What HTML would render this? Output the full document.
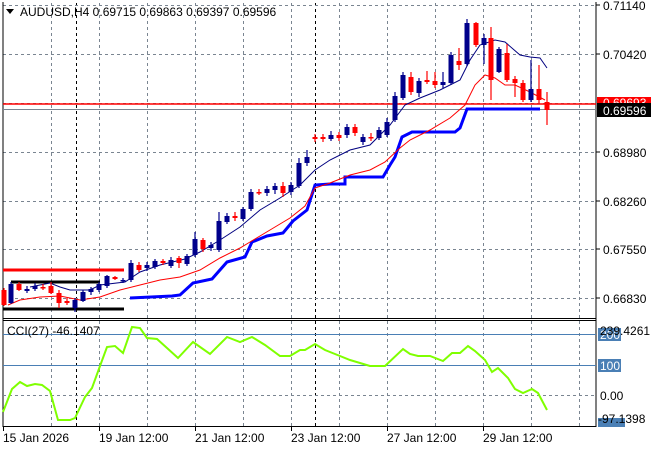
<!DOCTYPE html>
<html><head><meta charset="utf-8"><style>
html,body{margin:0;padding:0;background:#fff;width:660px;height:450px;overflow:hidden}
svg{display:block;font-family:"Liberation Sans",sans-serif}
</style></head><body>
<svg id="s" width="660" height="450" xmlns="http://www.w3.org/2000/svg">
<rect width="660" height="450" fill="#fff"/>
<g id="grid" stroke="#7a8591" stroke-width="1" stroke-dasharray="3,3" shape-rendering="crispEdges"></g>
<g fill="none" stroke="#000" shape-rendering="crispEdges">
<line x1="3" y1="2" x2="3" y2="427"/>
<line x1="596" y1="2" x2="596" y2="427"/>
<line x1="3" y1="318.5" x2="596" y2="318.5"/>
<line x1="3" y1="320.5" x2="596" y2="320.5"/>
<line x1="3" y1="426.5" x2="596" y2="426.5"/>
</g>
<g stroke="#4a7fb5" shape-rendering="crispEdges">
<line x1="3" y1="334.5" x2="596" y2="334.5"/>
<line x1="3" y1="365.5" x2="596" y2="365.5"/>
</g>
<line x1="3" y1="395.5" x2="596" y2="395.5" stroke="#7a8591" stroke-dasharray="3,3" shape-rendering="crispEdges"/>
<line x1="3" y1="104" x2="596" y2="104" stroke="#ff0000" stroke-width="1.5"/>
<line x1="3" y1="109.5" x2="596" y2="109.5" stroke="#7a8591"/>
<line x1="3" y1="270" x2="124" y2="270" stroke="#ff0000" stroke-width="3"/>
<line x1="11" y1="282" x2="100" y2="282" stroke="#000" stroke-width="3"/>
<line x1="3" y1="309" x2="124" y2="309" stroke="#000" stroke-width="3"/>
<polyline fill="none" stroke="#0000ff" stroke-width="3" points="130,298 172,296 180,295 193,283 212,279 227,262 245,257 252,242 267,236 283,233 293,221 307,210 315,185 330,184 345,184 345,177 383,177 390,165 395,157 402,137 412,132 455,132 460,128 467,109 540,109"/>
<polyline fill="none" stroke="#000080" stroke-width="1" points="30,287 50,283 60,287 70,290 90,290 100,285 125,282 140,272 160,265 185,259 200,252 220,240 240,227 260,210 280,198 300,185 315,170 330,160 350,150 370,145 390,125 405,105 420,98 440,90 460,80 470,60 480,45 495,40 505,42 520,55 530,57 540,58 547,68"/>
<polyline fill="none" stroke="#ff0000" stroke-width="1" points="8,305 20,300 40,297 60,296 80,300 100,297 120,290 140,285 160,280 180,277 200,270 220,258 240,248 250,242 270,230 290,218 305,206 315,188 330,183 350,175 370,170 385,162 400,148 410,140 430,130 450,118 465,105 475,85 485,75 495,78 505,85 515,85 530,92 545,100"/>
<g id="candles"></g>
<polyline fill="none" stroke="#7fff00" stroke-width="2" points="3,412 12,389 20,382 27,386 35,384 42,385 50,391 58,420 70,420 75,418 85,397 92,388 100,366 107,347 115,346 123,353 132,327 140,328 147,338 157,339 167,348 178,358 193,342 210,354 227,337 240,342 252,337 265,345 280,356 290,356 300,350 305,350 315,344 325,350 340,356 350,360 370,366 385,366 403,349 410,354 418,356 430,356 443,361 452,353 460,353 468,346 475,351 485,360 492,372 498,368 508,378 515,389 523,393 532,389 538,393 547,410"/>
<polygon points="6,9 14,9 10,14" fill="#000"/>
<text x="20" y="16" font-size="12" fill="#000">AUDUSD,H4  0.69715 0.69863 0.69397 0.69596</text>
<text x="7" y="335" font-size="12" fill="#000">CCI(27) -46.1407</text>
<g font-size="12" fill="#000">
<g stroke="#000" shape-rendering="crispEdges">
<line x1="596" y1="5" x2="600" y2="5"/><line x1="596" y1="54" x2="600" y2="54"/><line x1="596" y1="152" x2="600" y2="152"/><line x1="596" y1="201" x2="600" y2="201"/><line x1="596" y1="249" x2="600" y2="249"/><line x1="596" y1="298" x2="600" y2="298"/>
</g>
<text x="603" y="10">0.71140</text>
<text x="603" y="59">0.70420</text>
<text x="603" y="157">0.68980</text>
<text x="603" y="206">0.68260</text>
<text x="603" y="254">0.67550</text>
<text x="603" y="303">0.66830</text>
<rect x="597" y="97" width="54" height="11" fill="#ff0000"/>
<text x="603" y="107" fill="#fff">0.69693</text>
<rect x="597" y="103" width="54" height="14" fill="#000"/>
<text x="603" y="115" fill="#fff">0.69596</text>
<rect x="598" y="328" width="23" height="13" fill="#4a7fb5"/>
<text x="600" y="339" fill="#fff">200</text>
<text x="600" y="335">239.4261</text>
<rect x="598" y="359" width="23" height="13" fill="#4a7fb5"/>
<text x="600" y="370" fill="#fff">100</text>
<text x="600" y="400">0.00</text>
<rect x="598" y="418" width="27" height="9" fill="#4a7fb5"/>
<text x="598" y="423">-97.1398</text>
</g>
<g font-size="12" fill="#000">
<text x="3" y="442">15 Jan 2026</text>
<text x="99" y="442">19 Jan 12:00</text>
<text x="195" y="442">21 Jan 12:00</text>
<text x="291" y="442">23 Jan 12:00</text>
<text x="387" y="442">27 Jan 12:00</text>
<text x="483" y="442">29 Jan 12:00</text>
<g stroke="#000" shape-rendering="crispEdges">
<line x1="3.5" y1="427" x2="3.5" y2="431"/><line x1="99.5" y1="427" x2="99.5" y2="431"/><line x1="195.5" y1="427" x2="195.5" y2="431"/><line x1="291.5" y1="427" x2="291.5" y2="431"/><line x1="387.5" y1="427" x2="387.5" y2="431"/><line x1="483.5" y1="427" x2="483.5" y2="431"/>
</g>
</g>
</svg>
<script>
var NS="http://www.w3.org/2000/svg";
function el(p,t,a){var e=document.createElementNS(NS,t);for(var k in a)e.setAttribute(k,a[k]);p.appendChild(e);return e;}
var g=document.getElementById("grid");
[51,99,147,195,243,291,339,387,435,483,531,579].forEach(function(x){
 el(g,"line",{x1:x+.5,y1:3,x2:x+.5,y2:318});el(g,"line",{x1:x+.5,y1:321,x2:x+.5,y2:426});});
[76,315].forEach(function(x){
 el(g,"line",{x1:x+.5,y1:3,x2:x+.5,y2:426,stroke:"#000"});});
[5,54,152,201,249,298].forEach(function(y){el(g,"line",{x1:3,y1:y+.5,x2:596,y2:y+.5});});
el(g,"line",{x1:3,y1:103.5,x2:596,y2:103.5});
var C=[[4,290,305,288,306],[11,303,284,282,304],[19,284,290,282,291],[27,291,289,286,293],[35,289,286,283,291],[43,287,287,284,290],[51,286,293,282,294],[59,293,303,290,308],[67,301,303,298,305],[75,308,300,298,312],[83,301,292,290,302],[91,292,289,287,295],[99,290,284,282,292],[107,286,276,275,288],[115,277,279,276,280],[123,281,280,278,283],[131,280,263,260,282],[139,265,270,262,272],[147,268,265,262,271],[155,267,261,259,269],[163,261,263,259,265],[171,266,260,257,268],[179,258,263,256,268],[187,264,256,254,266],[195,255,239,232,257],[203,240,249,238,252],[211,248,245,242,251],[219,250,221,212,252],[227,222,216,213,224],[235,216,218,212,221],[243,219,209,207,221],[251,209,192,189,211],[259,192,192,189,195],[267,193,189,186,196],[275,190,186,183,194],[283,186,193,182,197],[291,192,185,182,195],[299,186,163,158,188],[307,163,157,150,166],[315,137,139,134,142],[323,137,139,134,142],[331,139,135,131,141],[339,135,138,132,141],[347,135,127,124,138],[355,127,133,124,136],[363,142,137,134,145],[371,137,138,133,141],[379,138,130,127,140],[387,135,122,118,137],[395,120,96,92,122],[403,98,75,72,100],[411,77,92,72,95],[419,93,81,78,97],[427,80,82,71,84],[435,81,85,72,88],[443,85,82,72,88],[451,83,55,52,85],[459,61,65,48,70],[467,64,23,19,66],[476,23,45,22,47],[484,45,38,34,64],[491,38,80,27,100],[499,72,49,47,73],[507,53,80,44,82],[515,79,83,76,97],[523,83,100,80,102],[531,100,89,60,102],[539,89,100,65,103],[547,102,110,92,125]];
var cg=document.getElementById("candles");
C.forEach(function(c){var up=c[2]<c[1];var col=up?"#00008b":"#ff0000";
 el(cg,"line",{x1:c[0],y1:c[3],x2:c[0],y2:c[4],stroke:col,"stroke-width":1.2});
 var t=Math.min(c[1],c[2]),h=Math.max(1.5,Math.abs(c[1]-c[2]));
 el(cg,"rect",{x:c[0]-2.5,y:t,width:5,height:h,fill:col});});
</script>
</body></html>
